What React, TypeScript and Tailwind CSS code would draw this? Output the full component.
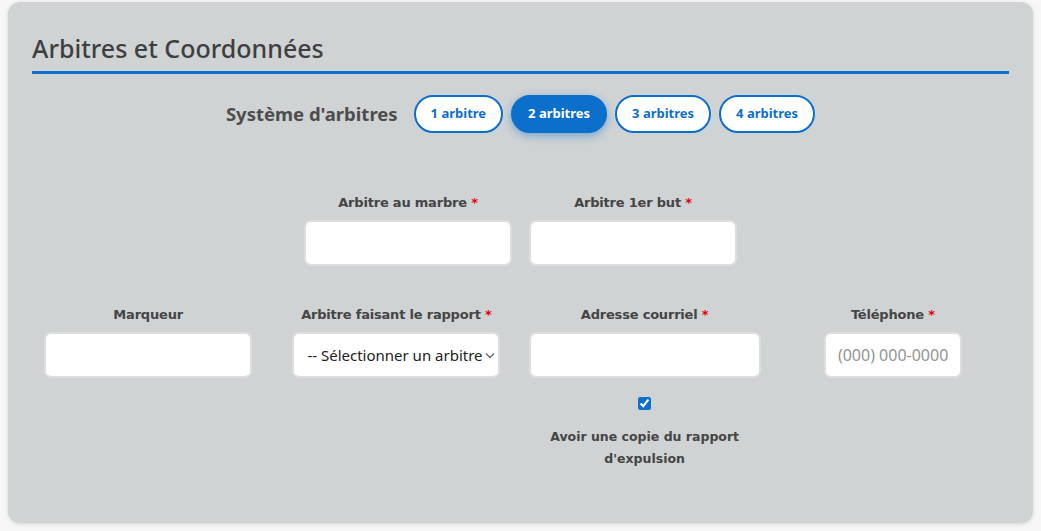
import { useState } from 'react'

const SYSTEMS = ['1 arbitre', '2 arbitres', '3 arbitres', '4 arbitres']

const labelFont = { fontFamily: '"DejaVu Sans", Verdana, sans-serif' }

function Req() {
  return <span className="text-[#e8000b]"> *</span>
}

function FieldLabel({ text, required }: { text: string; required?: boolean }) {
  return (
    <label className="block text-center text-[13px] font-bold leading-[20px] text-[#454545] tracking-[-0.2px]" style={labelFont}>
      {text}
      {required && <Req />}
    </label>
  )
}

// no font size here so the select can pick its own
const boxCls = 'h-[46px] rounded-[7px] border-2 border-[#dedede] bg-white text-[#222] outline-none'
const inputCls = `${boxCls} px-3 text-[16px] placeholder:text-[#949494]`

export default function App() {
  const [system, setSystem] = useState(1)
  const [copy, setCopy] = useState(true)

  return (
    <div className="min-h-[531px] bg-[#f7f7f7] px-2 pt-[2px]" style={{ fontFamily: '"Noto Sans", "Open Sans", sans-serif' }}>
      <div className="h-[521px] rounded-xl bg-[#cfd3d4] px-6 pt-[30px] shadow-[0_1px_4px_rgba(0,0,0,0.15)]">
        <h2 className="border-b-[3px] border-[#0b6fcb] pb-[6px] text-[25px] font-medium leading-[33px] text-[#3f3f3f]">
          Arbitres et Coordonnées
        </h2>

        <div className="mt-[21px] flex items-center justify-center gap-2">
          <span className="mr-2 text-[18.5px] font-bold text-[#4d4d4d]">Système d'arbitres</span>
          {SYSTEMS.map((s, i) => (
            <button
              key={s}
              onClick={() => setSystem(i)}
              className={
                i === system
                  ? 'h-[38px] rounded-full border-2 border-[#0b6fcb] bg-[#0b6fcb] px-[15px] text-[13px] font-bold text-white shadow-[0_3px_8px_rgba(11,111,203,0.45)]'
                  : 'h-[38px] rounded-full border-2 border-[#0b6fcb] bg-white px-[15px] text-[13px] font-bold text-[#0b6fcb]'
              }
            >
              {s}
            </button>
          ))}
        </div>

        <div className="mt-[60px] flex justify-center gap-[17px]">
          <div className="flex w-[208px] flex-col gap-[7px]">
            <FieldLabel text="Arbitre au marbre" required />
            <input className={inputCls} />
          </div>
          <div className="flex w-[208px] flex-col gap-[7px]">
            <FieldLabel text="Arbitre 1er but" required />
            <input className={inputCls} />
          </div>
        </div>

        <div className="mt-[39px] grid grid-cols-4 gap-4">
          <div className="flex flex-col items-center gap-[7px]">
            <FieldLabel text="Marqueur" />
            <input className={`${inputCls} w-[208px]`} />
          </div>
          <div className="flex flex-col items-center gap-[7px]">
            <FieldLabel text="Arbitre faisant le rapport" required />
            <div className="relative w-[208px]">
              <select className={`${boxCls} w-full appearance-none pl-[13px] pr-[14px] text-[15px]`}>
                <option>-- Sélectionner un arbitre --</option>
              </select>
              <svg className="pointer-events-none absolute right-[5px] top-[20px] h-[7px] w-[10px] bg-white" viewBox="0 0 10 7" fill="none">
                <path d="M1 1.5l4 4 4-4" stroke="#666" strokeWidth="1.3" />
              </svg>
            </div>
          </div>
          <div className="flex flex-col items-center gap-[7px]">
            <FieldLabel text="Adresse courriel" required />
            <input type="email" className={`${inputCls} w-full`} />
            <input
              type="checkbox"
              checked={copy}
              onChange={e => setCopy(e.target.checked)}
              className="mt-[12px] h-[13px] w-[13px] accent-[#0b6fcb]"
            />
            <p className="mt-[9px] text-center text-[12.5px] font-bold leading-[22px] text-[#454545]" style={labelFont}>
              Avoir une copie du rapport
              <br />
              d'expulsion
            </p>
          </div>
          <div className="flex flex-col items-center gap-[7px]">
            <FieldLabel text="Téléphone" required />
            <input className={`${inputCls} w-[138px]`} placeholder="(000) 000-0000" />
          </div>
        </div>
      </div>
    </div>
  )
}
